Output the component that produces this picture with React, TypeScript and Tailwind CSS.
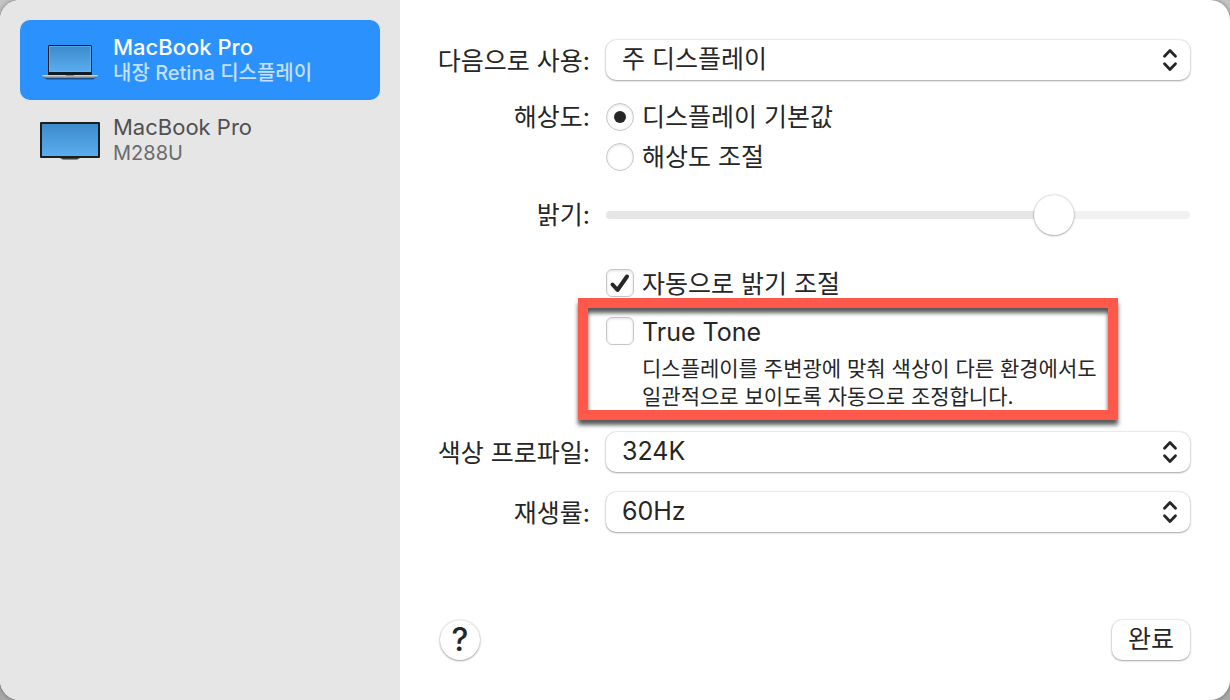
import React, { useState } from 'react';

interface DisplayItem {
  id: string;
  name: string;
  detail: string;
  kind: 'laptop' | 'monitor';
}

const displays: DisplayItem[] = [
  { id: 'builtin', name: 'MacBook Pro', detail: '내장 Retina 디스플레이', kind: 'laptop' },
  { id: 'm288u', name: 'MacBook Pro', detail: 'M288U', kind: 'monitor' },
];

const LaptopIcon = () => (
  <svg width="60" height="40" viewBox="0 0 60 40" aria-hidden="true">
    <defs>
      <linearGradient id="laptopScreen" x1="0" y1="0" x2="0" y2="1">
        <stop offset="0" stopColor="#3c8ccb" />
        <stop offset="1" stopColor="#5badf0" />
      </linearGradient>
      <linearGradient id="laptopBase" x1="0" y1="0" x2="0" y2="1">
        <stop offset="0" stopColor="#e2e2e2" />
        <stop offset="1" stopColor="#77736c" />
      </linearGradient>
    </defs>
    <rect x="8" y="5" width="44" height="30" rx="1.5" fill="#111c26" />
    <rect x="9" y="6" width="42" height="26" fill="url(#laptopScreen)" />
    <rect x="9.5" y="6.5" width="41" height="25" fill="none" stroke="#6dbdf2" strokeOpacity="0.5" />
    <path d="M3 37h54l-4 2.500H7z" fill="#174f8c" />
    <path d="M2 35h56c0 1.500-2 3-5 3H7c-3 0-5-1.500-5-3z" fill="url(#laptopBase)" />
    <rect x="8" y="34" width="44" height="1" fill="#111c26" />
    <rect x="26" y="35" width="8" height="1" fill="#8b8b8b" />
  </svg>
);

const MonitorIcon = () => (
  <svg width="60" height="40" viewBox="0 0 60 40" aria-hidden="true">
    <defs>
      <linearGradient id="monitorScreen" x1="0" y1="0" x2="0" y2="1">
        <stop offset="0" stopColor="#3c8ccb" />
        <stop offset="1" stopColor="#5badf0" />
      </linearGradient>
    </defs>
    <path d="M20 38h20l-3 2H23z" fill="#8f8f8f" />
    <path d="M20 37h20v1l-3 1H23l-3-1z" fill="#3a3a3a" />
    <rect x="0" y="2" width="60" height="36" rx="1" fill="#1a1f22" />
    <rect x="2" y="4" width="56" height="32" fill="url(#monitorScreen)" />
  </svg>
);

const ChevronUpDown = () => (
  <svg
    className="pointer-events-none absolute right-3 top-2 h-6 w-4"
    viewBox="0 0 16 24"
    fill="none"
    stroke="#262626"
    strokeWidth="2.8"
    strokeLinecap="round"
    strokeLinejoin="round"
    aria-hidden="true"
  >
    <path d="M2.500 8.200 8 2.600l5.500 5.600" />
    <path d="M2.500 15.800 8 21.400l5.500-5.600" />
  </svg>
);

interface SelectProps {
  id: string;
  options: string[];
}

const Select: React.FC<SelectProps> = ({ id, options }) => (
  <div className="relative flex-1">
    <select
      id={id}
      className="block h-10 w-full appearance-none rounded-[10px] bg-white pb-0.5 pl-4 pr-10 shadow-[0_0_2px_rgba(0,0,0,0.25),0_1px_2px_rgba(0,0,0,0.3)]"
    >
      {options.map((option) => (
        <option key={option}>{option}</option>
      ))}
    </select>
    <ChevronUpDown />
  </div>
);

interface CheckboxProps {
  label: string;
  checked: boolean;
  onChange: (checked: boolean) => void;
}

const Checkbox: React.FC<CheckboxProps> = ({ label, checked, onChange }) => (
  <label className="flex h-8 items-center gap-2">
    <span className="grid">
      <input
        type="checkbox"
        checked={checked}
        onChange={(e) => onChange(e.target.checked)}
        className="col-start-1 row-start-1 h-7 w-7 appearance-none rounded-md border border-[#c6c6c6] bg-white shadow-[inset_0_1px_3px_rgba(0,0,0,0.12)]"
      />
      {checked && (
        <svg
          className="pointer-events-none col-start-1 row-start-1 h-7 w-7"
          viewBox="0 0 28 28"
          fill="none"
          stroke="#262626"
          strokeWidth="4"
          strokeLinecap="round"
          strokeLinejoin="round"
          aria-hidden="true"
        >
          <path d="M6.500 15.500 11.500 21 21 7.500" />
        </svg>
      )}
    </span>
    <span className="pt-0.5">{label}</span>
  </label>
);

const resolutions = ['디스플레이 기본값', '해상도 조절'];

export default function App() {
  const [selected, setSelected] = useState('builtin');
  const [resolution, setResolution] = useState(resolutions[0]);
  const [brightness, setBrightness] = useState(78.7);
  const [autoBrightness, setAutoBrightness] = useState(true);
  const [trueTone, setTrueTone] = useState(false);

  return (
    <div className="min-h-screen bg-linear-to-b from-[#c4c4c4] to-[#a8a8a8] font-[Inter,'Noto_Sans_CJK_KR',sans-serif] text-[25px] leading-8 text-[#262626]">
      <div className="flex min-h-screen overflow-hidden rounded-[20px] bg-white shadow-[0_0_4px_rgba(0,0,0,0.4)]">
        <aside className="w-[400px] shrink-0 bg-[#e6e6e6] p-5">
          {displays.map((display) => {
            const active = display.id === selected;
            return (
              <button
                key={display.id}
                onClick={() => setSelected(display.id)}
                className={`flex h-20 w-full items-center gap-[13px] rounded-[10px] px-5 text-left ${
                  active ? 'bg-[#2b91fc] font-medium text-white' : 'text-[#505050]'
                }`}
              >
                {display.kind === 'laptop' ? <LaptopIcon /> : <MonitorIcon />}
                <span>
                  <span className="block text-[22px] leading-[26px]">{display.name}</span>
                  <span className={`block text-xl leading-[26px] ${active ? 'text-[#c3e0ff]' : 'text-[#6b6b6b]'}`}>
                    {display.detail}
                  </span>
                </span>
              </button>
            );
          })}
        </aside>

        <main className="flex flex-1 flex-col py-10 pl-9 pr-10">
          <div className="flex items-center gap-4">
            <label htmlFor="use-as" className="w-[154px] pt-0.5 text-right">다음으로 사용:</label>
            <Select id="use-as" options={['주 디스플레이', '확장된 디스플레이']} />
          </div>

          <div role="radiogroup" aria-labelledby="resolution-label" className="mt-[17px] flex gap-4">
            <span id="resolution-label" className="w-[154px] text-right leading-10">해상도:</span>
            <div>
              {resolutions.map((name) => (
                <label key={name} className="flex h-10 items-center gap-2">
                  <input
                    type="radio"
                    name="resolution"
                    checked={resolution === name}
                    onChange={() => setResolution(name)}
                    className="grid h-7 w-7 appearance-none place-items-center rounded-full border border-[#c6c6c6] bg-white shadow-[inset_0_1px_3px_rgba(0,0,0,0.12)] before:h-3 before:w-3 before:rounded-full checked:before:bg-[#262626]"
                  />
                  {name}
                </label>
              ))}
            </div>
          </div>

          <div className="mt-[18px] flex items-center gap-4">
            <label htmlFor="brightness" className="w-[154px] text-right leading-10">밝기:</label>
            <input
              id="brightness"
              type="range"
              min={0}
              max={100}
              step={0.1}
              value={brightness}
              onChange={(e) => setBrightness(Number(e.target.value))}
              style={{ backgroundImage: `linear-gradient(to right, #e6e6e6 ${brightness}%, #f1f1f1 ${brightness}%)` }}
              className="h-2 min-w-0 flex-1 appearance-none rounded-full [&::-webkit-slider-thumb]:h-10 [&::-webkit-slider-thumb]:w-10 [&::-webkit-slider-thumb]:appearance-none [&::-webkit-slider-thumb]:rounded-full [&::-webkit-slider-thumb]:bg-white [&::-webkit-slider-thumb]:shadow-[0_0_2px_rgba(0,0,0,0.3),0_1px_2px_rgba(0,0,0,0.25)]"
            />
          </div>

          <div className="ml-[170px] mt-8">
            <Checkbox label="자동으로 밝기 조절" checked={autoBrightness} onChange={setAutoBrightness} />
            <div className="relative mt-4">
              <Checkbox label="True Tone" checked={trueTone} onChange={setTrueTone} />
              <p className="ml-9 mt-2 whitespace-nowrap text-[21px] leading-7">
                디스플레이를 주변광에 맞춰 색상이 다른 환경에서도
                <br />
                일관적으로 보이도록 자동으로 조정합니다.
              </p>
              {/* highlight frame */}
              <div className="pointer-events-none absolute -bottom-[9px] -left-7 -top-[17px] right-[72px] border-10 border-[#ff594b] drop-shadow-[0_5px_2px_rgba(0,0,0,0.65)]" />
            </div>
          </div>

          <div className="mt-[21px] flex items-center gap-4">
            <label htmlFor="profile" className="w-[154px] pt-0.5 text-right">색상 프로파일:</label>
            <Select id="profile" options={['324K', 'sRGB IEC61966-2.1']} />
          </div>
          <div className="mt-5 flex items-center gap-4">
            <label htmlFor="refresh" className="w-[154px] pt-0.5 text-right">재생률:</label>
            <Select id="refresh" options={['60Hz', '30Hz']} />
          </div>

          <div className="mt-auto flex justify-between pl-1">
            <button
              aria-label="도움말"
              className="h-10 w-10 rounded-full bg-white text-[32px] font-medium shadow-[0_0_2px_rgba(0,0,0,0.25),0_1px_2px_rgba(0,0,0,0.3)]"
            >
              ?
            </button>
            <button className="h-10 rounded-[10px] bg-white px-4 pb-0.5 shadow-[0_0_2px_rgba(0,0,0,0.25),0_1px_2px_rgba(0,0,0,0.3)]">
              완료
            </button>
          </div>
        </main>
      </div>
    </div>
  );
}
